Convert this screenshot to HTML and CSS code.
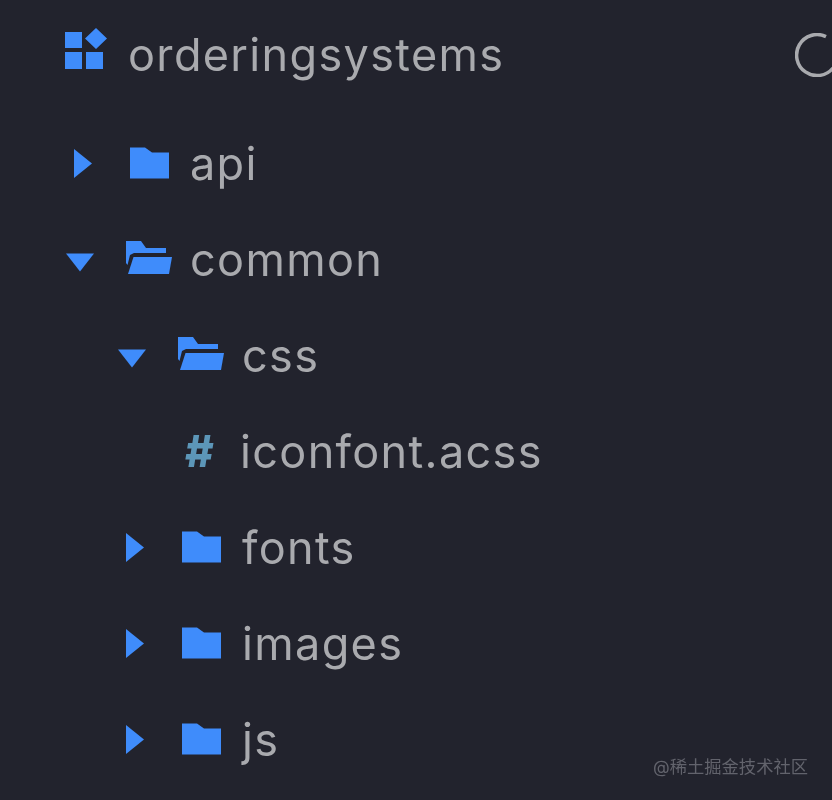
FILE: index.html
```html
<!DOCTYPE html>
<html lang="zh">
<head>
<meta charset="utf-8">
<title>orderingsystems</title>
<link rel="stylesheet" href="styles.css">
</head>
<body>
<svg class="defs" width="0" height="0" aria-hidden="true">
  <defs>
    <symbol id="closed" viewBox="0 0 46 38"><path d="M4 3.500H19L26 8.500H43V34.500H4Z"/></symbol>
    <symbol id="open" viewBox="0 0 46 38"><path d="M0 1H15L20 8H40V13H8L4 15L1.500 25L0 23Z"/><path d="M7.500 17H46L43 34H2Z"/></symbol>
    <symbol id="right" viewBox="0 0 28 30"><path d="M8 1L26 15.500L8 30Z"/></symbol>
    <symbol id="down" viewBox="0 0 28 30"><path d="M0 9.500H28L14 27.500Z"/></symbol>
  </defs>
</svg>
<main class="tree">
  <header class="head">
    <svg class="logo" viewBox="0 0 44 42"><path d="M1 4H18V20H1ZM1 24H18V41H1ZM22 24H39V41H22ZM32 0L43 10.500L32 21L21 10.500Z"/></svg>
    <span class="label">orderingsystems</span>
    <svg class="spin" viewBox="0 0 44 44"><path d="M31 3.600A20.500 20.500 0 1 0 38 35"/></svg>
  </header>
  <div class="row">
    <svg class="caret"><use href="#right"/></svg>
    <svg class="icon"><use href="#closed"/></svg>
    <span class="label">api</span>
  </div>
  <div class="row">
    <svg class="caret"><use href="#down"/></svg>
    <svg class="icon"><use href="#open"/></svg>
    <span class="label">common</span>
  </div>
  <div class="row nested">
    <svg class="caret"><use href="#down"/></svg>
    <svg class="icon"><use href="#open"/></svg>
    <span class="label">css</span>
  </div>
  <div class="row nested">
    <span class="caret"></span>
    <span class="hash">#</span>
    <span class="label file">iconfont.acss</span>
  </div>
  <div class="row nested">
    <svg class="caret"><use href="#right"/></svg>
    <svg class="icon"><use href="#closed"/></svg>
    <span class="label">fonts</span>
  </div>
  <div class="row nested">
    <svg class="caret"><use href="#right"/></svg>
    <svg class="icon"><use href="#closed"/></svg>
    <span class="label">images</span>
  </div>
  <div class="row nested">
    <svg class="caret"><use href="#right"/></svg>
    <svg class="icon"><use href="#closed"/></svg>
    <span class="label">js</span>
  </div>
</main>
<footer class="mark">@稀土掘金技术社区</footer>
</body>
</html>
```
FILE: styles.css
```css
html, body {
  margin: 0;
  height: 800px;
  overflow: hidden;
  background: #22232d;
}
body {
  position: relative;
  font-family: Inter, "Noto Sans CJK SC", sans-serif;
}
.defs {
  position: absolute;
}
.tree {
  display: flex;
  flex-direction: column;
  padding-top: 7px;
  filter: blur(0.6px);
}
.head {
  display: flex;
  align-items: center;
  height: 96px;
  padding-left: 64px;
  margin-bottom: 12px;
}
.logo {
  width: 44px;
  height: 42px;
  margin-right: 20px;
  margin-top: -12px;
  fill: #3f8cfb;
  flex: none;
}
.spin {
  position: absolute;
  left: 795px;
  top: 33px;
  width: 44px;
  height: 44px;
  fill: none;
  stroke: #a9aaae;
  stroke-width: 3.5;
}
.row {
  display: flex;
  align-items: center;
  height: 96px;
  padding-left: 66px;
}
.nested {
  padding-left: 118px;
}
.caret {
  display: block;
  width: 28px;
  height: 30px;
  margin-right: 32px;
  fill: #3f8cfb;
  flex: none;
}
.icon {
  width: 46px;
  height: 38px;
  margin-right: 18px;
  fill: #3f8cfb;
  flex: none;
}
.hash {
  width: 46px;
  margin-right: 16px;
  padding-left: 7px;
  box-sizing: border-box;
  color: #5c96b8;
  font-size: 44px;
  font-weight: 800;
  line-height: 48px;
}
.label {
  color: #a9aaae;
  font-size: 45px;
  letter-spacing: 1.35px;
  line-height: 50px;
  white-space: nowrap;
}
.row .label {
  padding-top: 2px;
}
.mark {
  position: absolute;
  right: 24px;
  top: 756px;
  color: #62636c;
  font-size: 17.3px;
  line-height: 22px;
  filter: blur(0.5px);
}
```
